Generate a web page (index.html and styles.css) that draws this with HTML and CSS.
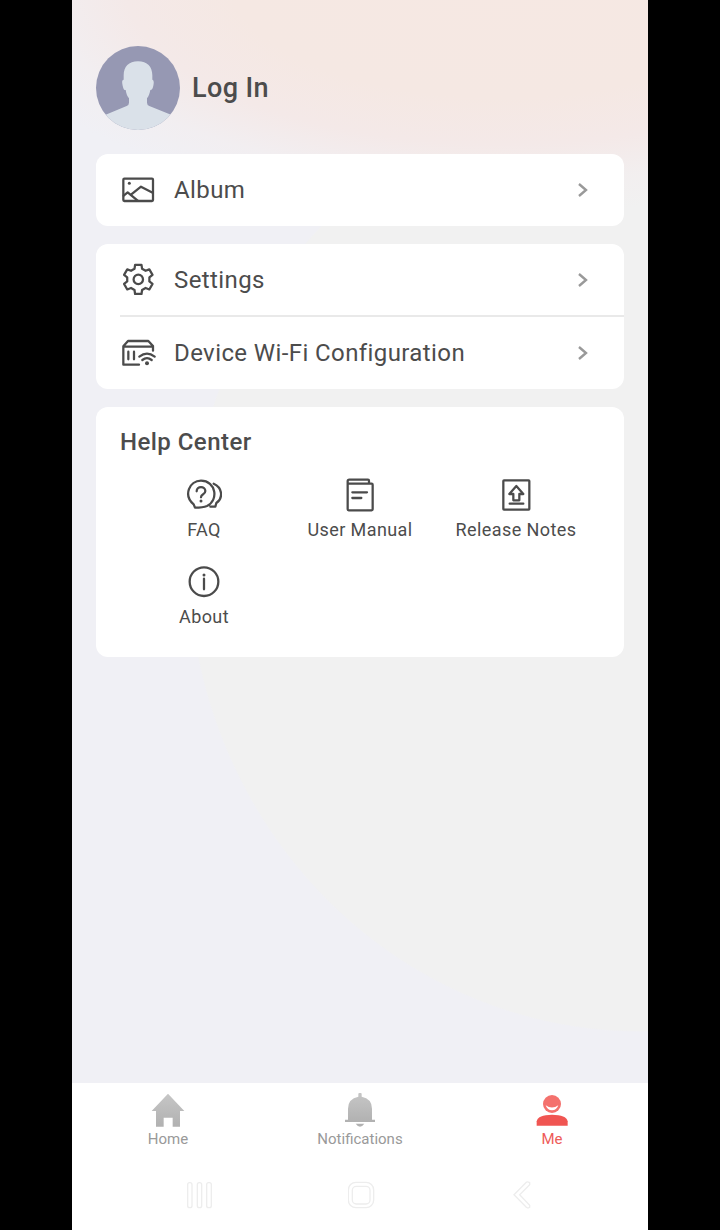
FILE: index.html
```html
<!DOCTYPE html>
<html lang="en">
<head>
<meta charset="utf-8">
<title>Me</title>
<link rel="stylesheet" href="styles.css">
</head>
<body>
<div class="phone">
  <main class="content">
    <header class="profile">
      <svg class="avatar" viewBox="72 47 252 252">
        <defs><clipPath id="round"><circle cx="198" cy="173" r="126"/></clipPath></defs>
        <g clip-path="url(#round)">
          <path fill="#9698b3" d="M72 47h252v252H72z"/>
          <path fill="#dae1e9" d="M198 93C170 93 155 109 155 135V148C149 149 150 157 152 166C154 176 156 179 161 179C163 191 166 198 171 204V217Q171 224 164 227L101 253V300H297V253L232 227Q225 224 225 217V204C230 198 233 190 235 179C240 178 242 175 244 166C246 157 246 149 241 148V135C241 109 226 93 198 93Z"/>
        </g>
      </svg>
      <h1 class="login">Log In</h1>
    </header>

    <section class="card">
      <div class="row">
        <svg class="row-icon line" viewBox="72 66 108 108"><rect x="82" y="86" width="89" height="67" rx="3"/><path d="M83 137L95 127L125 152M106 133L135 110L170 128"/><circle class="solid" cx="100" cy="100" r="4.5"/></svg>
        <span class="row-label">Album</span>
        <svg class="chevron" viewBox="0 0 12 16"><path d="M2 2L9 8L2 14"/></svg>
      </div>
    </section>

    <section class="card">
      <div class="row">
        <svg class="row-icon line" viewBox="-18 -17.5 36 36"><g class="fine" transform="translate(.3 -.1)"><path d="M-3.8-10.6L-3.2-14.6H3.2L3.8-10.6L7.28-8.59L11.04-10.07L14.24-4.53L11.08-2.01V2.01L14.24 4.53L11.04 10.07L7.28 8.59L3.8 10.6L3.2 14.6H-3.2L-3.8 10.6L-7.28 8.59L-11.04 10.07L-14.24 4.53L-11.08 2.01V-2.01L-14.24-4.53L-11.04-10.07L-7.28-8.59Z"/><circle r="4.7"/></g></svg>
        <span class="row-label">Settings</span>
        <svg class="chevron" viewBox="0 0 12 16"><path d="M2 2L9 8L2 14"/></svg>
      </div>
      <div class="row divided">
        <svg class="row-icon line" viewBox="72 284 108 108"><path d="M129 373H82V318L96 302H157L171 317V331M83 319H171M97 334V357M114 334V357M130 349Q153 331 176 349M139 359Q153 348 167 359"/><circle class="solid" cx="153" cy="369" r="6"/></svg>
        <span class="row-label">Device Wi-Fi Configuration</span>
        <svg class="chevron" viewBox="0 0 12 16"><path d="M2 2L9 8L2 14"/></svg>
      </div>
    </section>

    <section class="card help">
      <h2 class="help-title">Help Center</h2>
      <div class="tiles">
        <div class="tile">
          <svg class="tile-icon line" viewBox="270 231 108 108"><path d="M297 323L293 313C261 286 280 242 315 242C360 242 369 301 333 318Q321 323 297 323ZM353 251C380 263 382 294 361 309L358 320H343M302 274C302 257 328 258 328 273C328 284 315 281 315 292"/><circle class="solid" cx="315" cy="303" r="4.5"/></svg>
          <span class="tile-label">FAQ</span>
        </div>
        <div class="tile">
          <svg class="tile-icon line" viewBox="138 51 108 108"><path d="M155 71H227Q230 71 230 74V148Q230 151 227 151H158Q155 151 155 148V64Q155 59 160 59H216Q219 59 219 62V71M169 97H213M169 114H196"/></svg>
          <span class="tile-label">User Manual</span>
        </div>
        <div class="tile">
          <svg class="tile-icon line" viewBox="606 51 108 108"><rect x="622" y="61" width="78" height="88" rx="2"/><path d="M661 78L640 102H652V121H670V102H682ZM641 131H682"/></svg>
          <span class="tile-label">Release Notes</span>
        </div>
        <div class="tile">
          <svg class="tile-icon line" viewBox="270 492 108 108"><circle cx="324" cy="545" r="43"/><path d="M324 536V568"/><circle class="solid" cx="324" cy="525" r="4.5"/></svg>
          <span class="tile-label">About</span>
        </div>
      </div>
    </section>
  </main>

  <footer class="footer">
    <nav class="tabs">
      <div class="tab">
        <svg class="tab-icon" viewBox="234 51 108 108"><defs><linearGradient id="gray" x2="0" y2="1"><stop stop-color="#c6c6c6"/><stop offset="1" stop-color="#b1b1b1"/></linearGradient></defs><path fill="url(#gray)" d="M288 56L337 108H324V155H302V128H275V155H252V108H239Z"/></svg>
        <span class="tab-label">Home</span>
      </div>
      <div class="tab">
        <svg class="tab-icon" viewBox="156 51 108 108"><path fill="url(#gray)" d="M205 65V57Q205 54 208 54H212Q215 54 215 57V65Q246 71 246 101V134H255V141H165V134H174V101Q174 71 205 65Z"/><path fill="#b1b1b1" d="M197 146H223Q210 164 197 146Z"/></svg>
        <span class="tab-label">Notifications</span>
      </div>
      <div class="tab active">
        <svg class="tab-icon" viewBox="132 51 108 108"><circle cx="186" cy="87" r="27" fill="#f4716d"/><path fill="#fff" d="M167 91Q186 104 205 91Q200 106 186 106Q172 106 167 91Z"/><path fill="#f05552" d="M140 152V139Q144 119 186 119Q229 119 233 139V152Z"/></svg>
        <span class="tab-label">Me</span>
      </div>
    </nav>
    <div class="system">
      <svg viewBox="342 317 81 84"><rect x="347" y="322" width="13" height="75" rx="6"/><rect x="376" y="322" width="13" height="75" rx="6"/><rect x="404" y="322" width="14" height="75" rx="6"/></svg>
      <svg viewBox="172 317 81 84"><rect x="173" y="321" width="76" height="76" rx="23"/><rect x="185" y="333" width="53" height="53" rx="12"/></svg>
      <svg viewBox="57 317 81 84"><path d="M72 358L109 321Q112 318 119 322V328L89 358L119 390V396Q114 400 109 396Z"/></svg>
    </div>
  </footer>
</div>
</body>
</html>
```
FILE: styles.css
```css
* { box-sizing: border-box; }
body { margin: 0; background: #000; font-family: Roboto, sans-serif; color: #4c4c4c; }
h1, h2 { margin: 0; }
svg { display: block; flex: none; }

.phone {
  width: 576px;
  height: 1230px;
  margin: 0 auto;
  display: flex;
  flex-direction: column;
  overflow: hidden;
  background:
    radial-gradient(ellipse 540px 235px at 430px -20px, #f6e8e3 0%, #f5e8e3 50%, #f4e9e8 70%, rgba(243, 237, 238, .6) 86%, rgba(242, 240, 242, 0) 100%),
    radial-gradient(ellipse 452px 472px at 568px 560px, #f1f1f1 99.7%, #f0f0f5 100%);
}
.content { flex: 1; padding: 46px 24px 0; display: flex; flex-direction: column; gap: 18px; }
.profile { display: flex; align-items: center; gap: 12px; height: 84px; margin-bottom: 6px; }
.avatar { width: 84px; height: 84px; }
.login { font-size: 27px; font-weight: 500; letter-spacing: .4px; line-height: 32px; }

.card { background: #fff; border-radius: 12px; }
.row { display: flex; align-items: center; height: 72px; padding: 0 35.5px 0 24px; }
.row-icon { width: 36px; height: 36px; margin-right: 18px; }
.row-label { flex: 1; font-size: 24px; letter-spacing: .4px; line-height: 30px; white-space: nowrap; }
.divided { height: 73px; position: relative; }
.divided::before { content: ""; position: absolute; left: 24px; right: 0; top: -1px; height: 2px; background: #e9e9e9; }
.chevron { width: 12px; height: 16px; fill: none; stroke: #999; stroke-width: 2.4; }

.line { fill: none; stroke: #4b4b4b; stroke-width: 6.8; stroke-linejoin: round; stroke-linecap: round; }
.fine { stroke-width: 2.25; }
.solid { fill: #4b4b4b; stroke: none; }

.help { height: 250px; padding-top: 20px; }
.help-title { padding-left: 24px; font-size: 24px; font-weight: 500; letter-spacing: .45px; line-height: 30px; }
.tiles { display: grid; grid-template-columns: repeat(3, 156px); grid-auto-rows: 87px; padding: 20px 30px 0; }
.tile { display: flex; flex-direction: column; align-items: center; gap: 6px; }
.tile-icon { width: 36px; height: 36px; }
.tile-label { font-size: 18px; letter-spacing: .42px; line-height: 22px; white-space: nowrap; }

.footer { height: 147px; background: #fff; }
.tabs { display: grid; grid-template-columns: repeat(3, 1fr); padding-top: 9px; }
.tab { display: flex; flex-direction: column; align-items: center; gap: 2px; color: #999; }
.tab-icon { width: 36px; height: 36px; }
.tab-label { font-size: 15px; line-height: 18px; }
.active { color: #ee5b59; }
.system { display: flex; justify-content: space-between; padding: 33px 112px 0 114px; }
.system svg { width: 27px; height: 28px; fill: none; stroke: #ededed; stroke-width: 4; }
```
